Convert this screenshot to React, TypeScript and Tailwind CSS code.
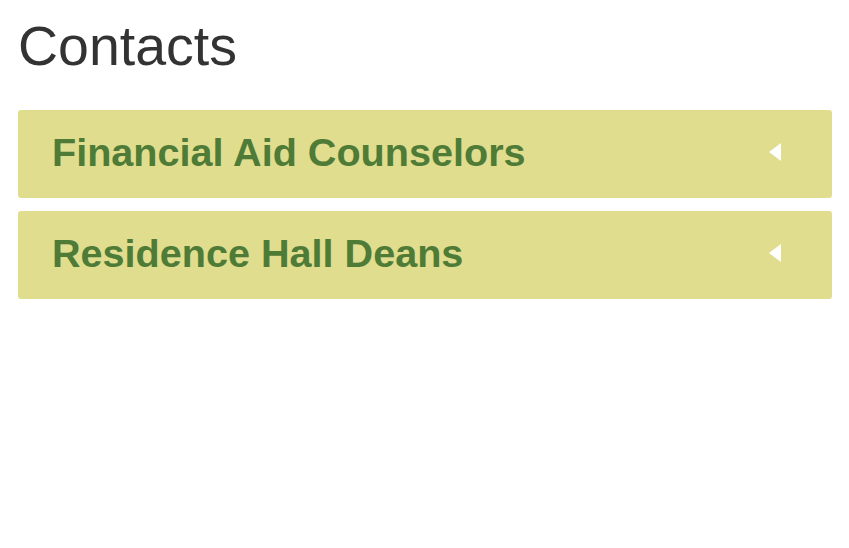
import * as React from "react";

const groups = ["Financial Aid Counselors", "Residence Hall Deans"];

function Caret() {
  return (
    <svg width="12" height="18" viewBox="0 0 12 18" className="shrink-0">
      <path d="M12 0 L12 18 L0 9 Z" fill="#ffffff" />
    </svg>
  );
}

export default function App() {
  return (
    <div
      className="w-[849px] h-[548px] bg-white pl-[18px] pt-[16px]"
      style={{ fontFamily: '"Liberation Sans", Arial, sans-serif' }}
    >
      <h2 className="text-[55.5px] leading-[61px] text-[#333333] font-normal">
        Contacts
      </h2>
      <div className="mt-[33px] w-[814px] flex flex-col gap-[13px]">
        {groups.map((g) => (
          <div
            key={g}
            className="h-[88px] bg-[#e0dd8f] rounded-[3px] flex items-center justify-between pl-[34px] pr-[51px] pb-[4px]"
          >
            <span className="text-[39.6px] leading-[44px] font-bold text-[#4e7b36]">
              {g}
            </span>
            <Caret />
          </div>
        ))}
      </div>
    </div>
  );
}
